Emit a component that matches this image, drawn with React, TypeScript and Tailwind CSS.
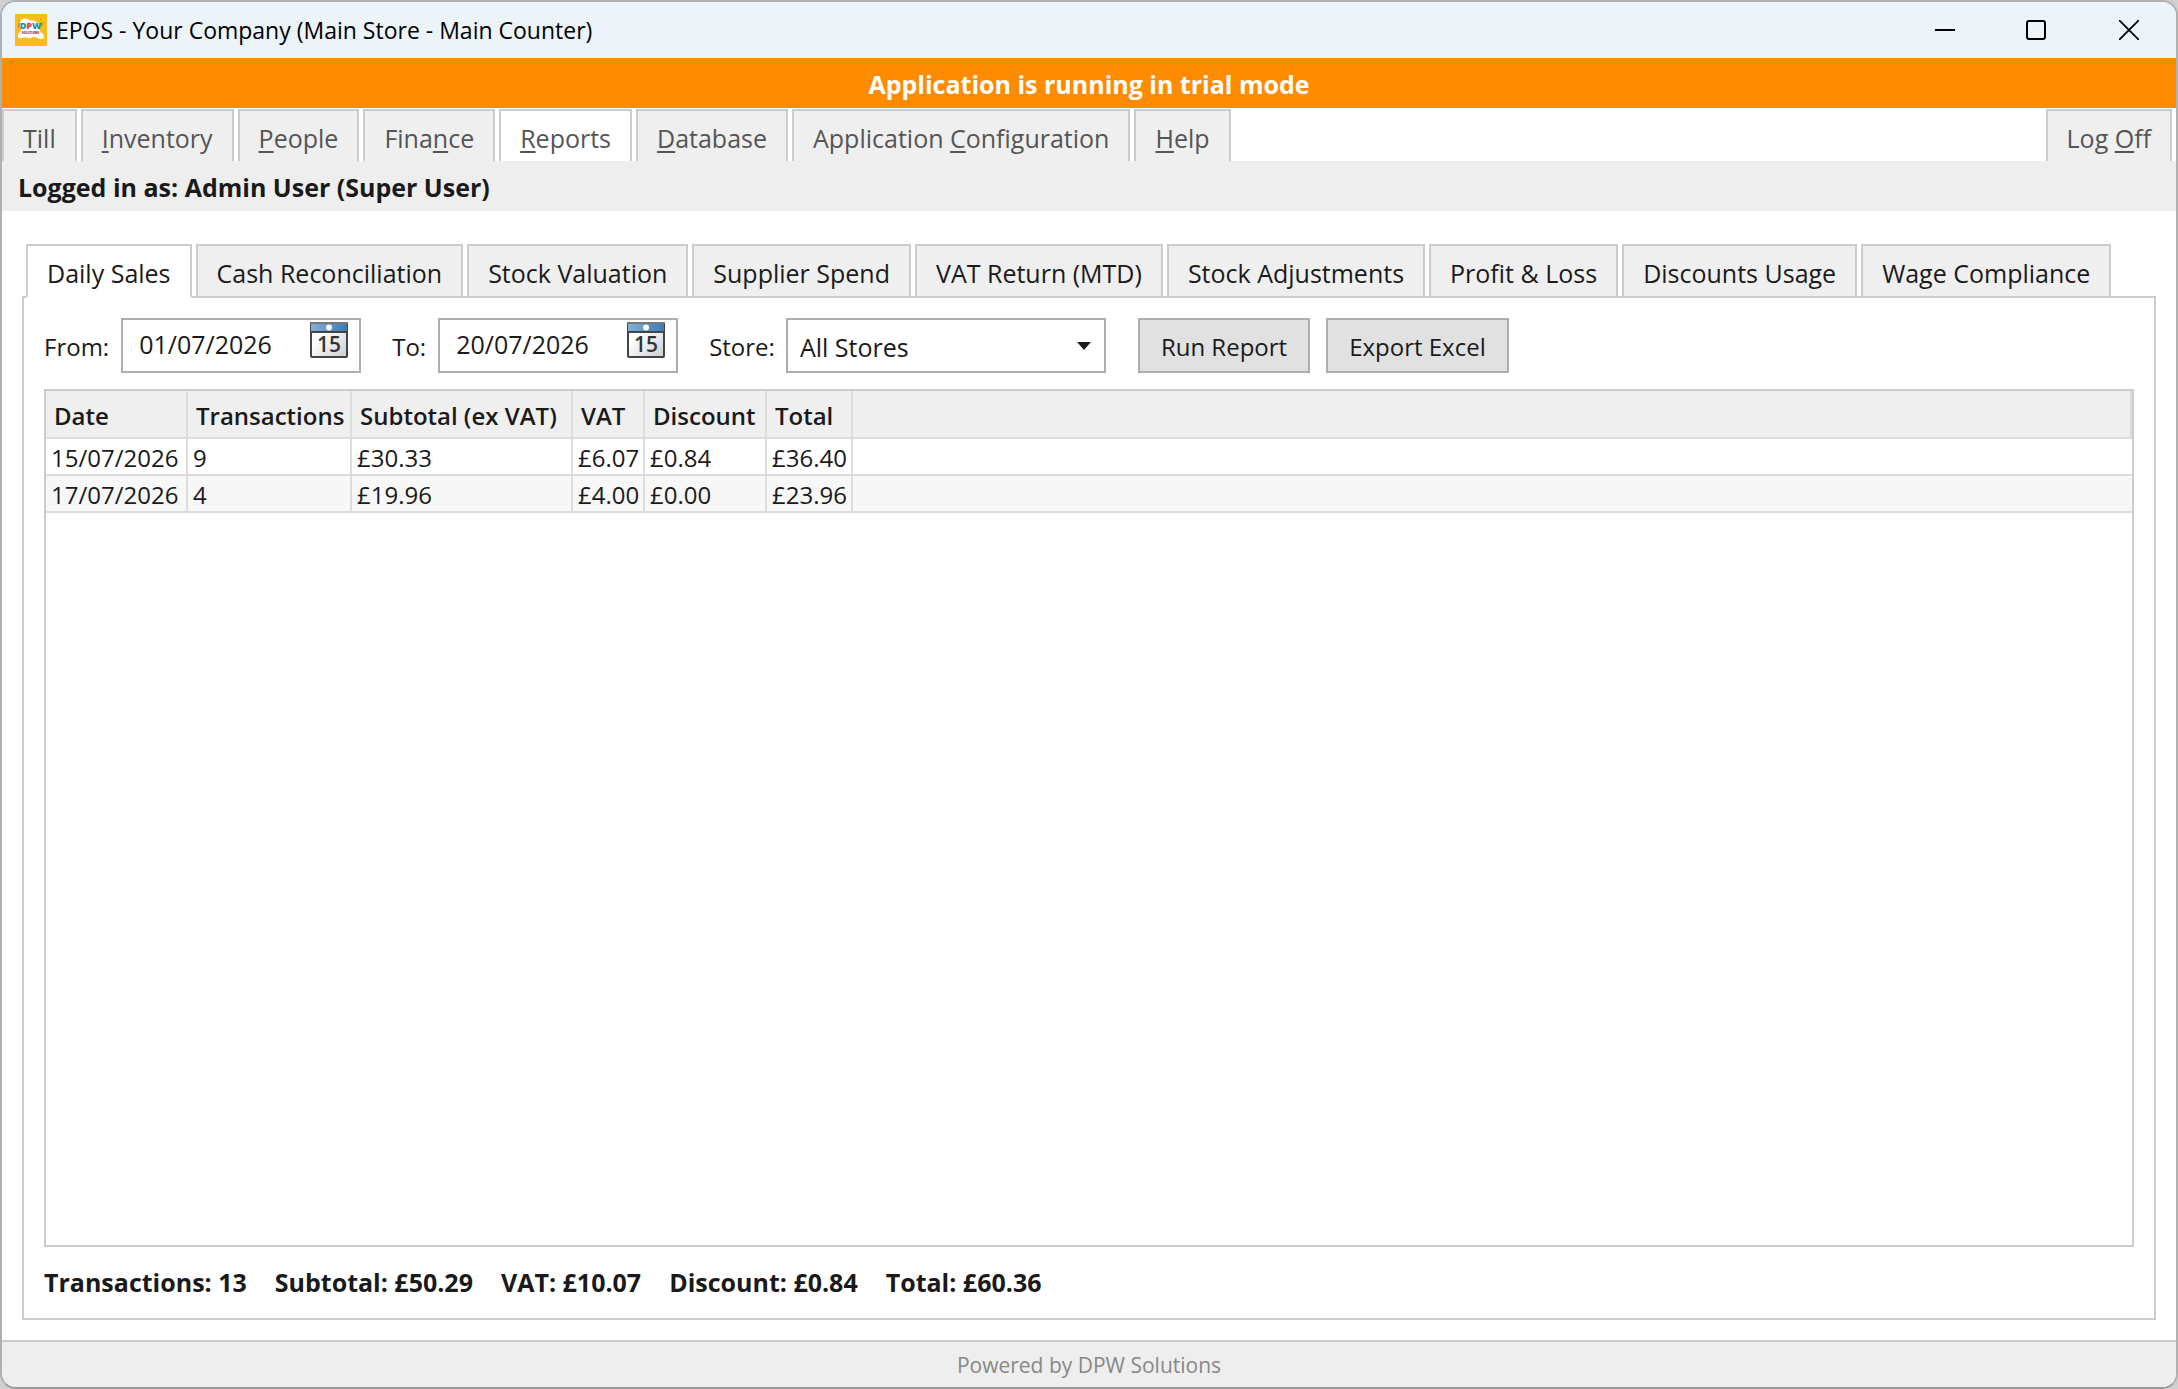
import { useState } from "react";

interface MenuTab {
  before: string;
  key: string;
  after: string;
}

interface SalesRow {
  date: string;
  transactions: number;
  subtotal: string;
  vat: string;
  discount: string;
  total: string;
}

const menuTabs: MenuTab[] = [
  { before: "", key: "T", after: "ill" },
  { before: "", key: "I", after: "nventory" },
  { before: "", key: "P", after: "eople" },
  { before: "Fina", key: "n", after: "ce" },
  { before: "", key: "R", after: "eports" },
  { before: "", key: "D", after: "atabase" },
  { before: "Application ", key: "C", after: "onfiguration" },
  { before: "", key: "H", after: "elp" },
];

const reportTabs = [
  "Daily Sales",
  "Cash Reconciliation",
  "Stock Valuation",
  "Supplier Spend",
  "VAT Return (MTD)",
  "Stock Adjustments",
  "Profit & Loss",
  "Discounts Usage",
  "Wage Compliance",
];

const columns = [
  { title: "Date", width: "w-[142px]" },
  { title: "Transactions", width: "w-[164px]" },
  { title: "Subtotal (ex VAT)", width: "w-[221px]" },
  { title: "VAT", width: "w-[72px]" },
  { title: "Discount", width: "w-[122px]" },
  { title: "Total", width: "w-[86px]" },
];

const rows: SalesRow[] = [
  {
    date: "15/07/2026",
    transactions: 9,
    subtotal: "£30.33",
    vat: "£6.07",
    discount: "£0.84",
    total: "£36.40",
  },
  {
    date: "17/07/2026",
    transactions: 4,
    subtotal: "£19.96",
    vat: "£4.00",
    discount: "£0.00",
    total: "£23.96",
  },
];

const totals = [
  "Transactions: 13",
  "Subtotal: £50.29",
  "VAT: £10.07",
  "Discount: £0.84",
  "Total: £60.36",
];

function Logo() {
  return (
    <svg viewBox="0 0 32 32" className="size-8" aria-hidden="true">
      <rect width="32" height="32" fill="#f9bc18" />
      <path
        d="M6 6c2-2 6-2 8 0 2 1 4 0 6 1 3 1 4 4 4 7 0 3 2 4 4 6 2 3 1 5-2 5-3 0-4-2-7-2s-4 2-7 1c-2-1-3-1-5 0-3 1-5-1-4-3 1-3 3-3 3-6 0-3-2-6 0-9z"
        fill="#fff"
      />
      <path d="M4 9v5M5 6l-1 1M27 8v4M25 5l1 1" stroke="#a5822a" strokeWidth="1" />
      <g
        fontFamily="Open Sans, sans-serif"
        fontWeight="800"
        textAnchor="middle"
      >
        <text x="15.5" y="15" fontSize="9">
          <tspan fill="#1f8fae">D</tspan>
          <tspan fill="#d9433a">P</tspan>
          <tspan fill="#1f8fae">W</tspan>
        </text>
        <text x="15.5" y="20" fontSize="3" fill="#8a3b34">
          SOLUTIONS
        </text>
      </g>
    </svg>
  );
}

function CalendarIcon() {
  return (
    <svg viewBox="0 0 38 36" className="h-9 w-[38px]" aria-hidden="true">
      <defs>
        <linearGradient id="cal-top" x1="0" y1="0" x2="1" y2="0">
          <stop offset="0" stopColor="#86b0d8" />
          <stop offset="1" stopColor="#3c7ab4" />
        </linearGradient>
        <linearGradient id="cal-page" x1="0" y1="0" x2="1" y2="1">
          <stop offset="0.3" stopColor="#fff" />
          <stop offset="1" stopColor="#c9ced3" />
        </linearGradient>
      </defs>
      <rect x="1" y="1" width="36" height="34" rx="1" fill="url(#cal-page)" stroke="#444" strokeWidth="2" />
      <rect x="1" y="1" width="36" height="8" fill="url(#cal-top)" />
      <path d="M0 1h38" stroke="#777" strokeWidth="2" />
      <path d="M0 10h38" stroke="#444" strokeWidth="2" />
      <circle cx="19" cy="5.5" r="3" fill="#fff" />
      <text
        x="19"
        y="30"
        textAnchor="middle"
        fontFamily="Open Sans, sans-serif"
        fontSize="21"
        fontWeight="600"
        fill="#333"
      >
        15
      </text>
    </svg>
  );
}

function TitleBar() {
  return (
    <header className="flex h-14 items-center bg-[#ecf4fa] pl-[13px]">
      <Logo />
      <h1 className="ml-[9px] text-[23px] text-black">
        EPOS - Your Company (Main Store - Main Counter)
      </h1>
      <div className="ml-auto flex h-full items-center">
        <button type="button" aria-label="Minimise" className="flex h-full w-[90px] items-center justify-center">
          <svg viewBox="0 0 20 20" className="size-5">
            <path d="M0 10h20" stroke="#000" strokeWidth="2" />
          </svg>
        </button>
        <button type="button" aria-label="Maximise" className="flex h-full w-[92px] items-center justify-center">
          <svg viewBox="0 0 20 20" className="size-5">
            <rect x="1" y="1" width="18" height="18" rx="2" fill="none" stroke="#000" strokeWidth="2" />
          </svg>
        </button>
        <button type="button" aria-label="Close" className="flex h-full w-[94px] items-center justify-center">
          <svg viewBox="0 0 20 20" className="size-5">
            <path d="M0 0l20 20M20 0L0 20" stroke="#000" strokeWidth="1.8" />
          </svg>
        </button>
      </div>
    </header>
  );
}

function MenuButton({
  tab,
  active = false,
  onClick,
}: {
  tab: MenuTab;
  active?: boolean;
  onClick?: () => void;
}) {
  return (
    <button
      type="button"
      onClick={onClick}
      className={`border-2 border-b-0 border-[#cccccc] px-[19px] pt-[3px] whitespace-nowrap text-[#555555] ${
        active ? "bg-white" : "bg-[#efefef]"
      }`}
    >
      {tab.before}
      <span className="underline decoration-2 underline-offset-3">{tab.key}</span>
      {tab.after}
    </button>
  );
}

function DateField({ id, label, value }: { id: string; label: string; value: string }) {
  return (
    <div className="mr-[31px] flex items-center gap-3">
      <label htmlFor={id} className="pt-0.5 text-[24px]">
        {label}
      </label>
      <div className="flex h-[55px] w-60 border-2 border-[#abadb3] bg-white">
        <input
          id={id}
          type="text"
          defaultValue={value}
          className="min-w-0 flex-1 pb-1 pl-4 outline-none"
        />
        <button type="button" aria-label="Show calendar" className="mt-0.5 mr-[11px] self-start">
          <CalendarIcon />
        </button>
      </div>
    </div>
  );
}

function SalesTable() {
  return (
    <div className="flex-1 border-2 border-[#cccccc] text-[24px]">
      <table className="w-full table-fixed border-separate border-spacing-0 text-left">
        <thead>
          <tr className="h-12">
            {columns.map((column) => (
              <th
                key={column.title}
                className={`border-r-2 border-b-2 border-[#dcdcdc] bg-[#efefef] pt-1 pl-2 font-semibold whitespace-nowrap ${column.width}`}
              >
                {column.title}
              </th>
            ))}
            <th className="border-r-2 border-b-2 border-[#dcdcdc] bg-[#efefef]" />
          </tr>
        </thead>
        <tbody>
          {rows.map((row) => (
            <tr key={row.date} className="h-[37px] even:bg-[#f7f7f7]">
              {Object.values(row).map((value, index) => (
                <td key={index} className="border-r-2 border-b-2 border-[#dcdcdc] pt-0.5 pl-[5px] whitespace-nowrap">
                  {value}
                </td>
              ))}
              <td className="border-b-2 border-[#dcdcdc]" />
            </tr>
          ))}
        </tbody>
      </table>
    </div>
  );
}

function App() {
  const [menu, setMenu] = useState(4);
  const [report, setReport] = useState(0);

  return (
    <div className="bg-[#d0d0d0] font-['Open_Sans','Noto_Sans',sans-serif] text-[25px] leading-8 text-[#1a1a1a]">
      <div className="flex min-h-screen flex-col overflow-hidden rounded-2xl border-2 border-[#b0b0b0] border-b-[#999999] bg-white">
        <TitleBar />

        <div className="flex h-[50px] items-center justify-center bg-[#ff8c00] pt-0.5 font-bold text-white">
          Application is running in trial mode
        </div>

        <nav className="flex h-[53px] gap-1 pt-px pr-1">
          {menuTabs.map((tab, index) => (
            <MenuButton
              key={tab.before + tab.key + tab.after}
              tab={tab}
              active={index === menu}
              onClick={() => setMenu(index)}
            />
          ))}
          <div className="ml-auto flex">
            <MenuButton tab={{ before: "Log ", key: "O", after: "ff" }} />
          </div>
        </nav>

        <div className="flex h-[50px] items-center bg-[#eeeeee] px-4 pt-0.5 font-bold">
          Logged in as: Admin User (Super User)
        </div>

        <main className="flex flex-1 flex-col px-5 pt-[33px] pb-5">
          <div role="tablist" className="z-10 -mb-0.5 flex h-[54px] gap-1 px-1">
            {reportTabs.map((name, index) => (
              <button
                key={name}
                type="button"
                role="tab"
                aria-selected={index === report}
                onClick={() => setReport(index)}
                className={`border-2 px-[19px] pt-[3px] whitespace-nowrap ${
                  index === report
                    ? "border-[#cccccc] border-b-white bg-white"
                    : "border-[#cccccc] bg-[#efefef]"
                }`}
              >
                {name}
              </button>
            ))}
          </div>

          <section className="flex flex-1 flex-col border-2 border-[#cccccc] px-5 pt-5">
            <form className="mb-4 flex items-center" onSubmit={(event) => event.preventDefault()}>
              <DateField id="from" label="From:" value="01/07/2026" />
              <DateField id="to" label="To:" value="20/07/2026" />

              <label htmlFor="store" className="mr-[11px] pt-0.5 text-[24px]">
                Store:
              </label>
              <div className="relative mr-8">
                <select
                  id="store"
                  className="h-[55px] w-80 appearance-none border-2 border-[#abadb3] bg-white pt-0.5 pl-3 outline-none"
                >
                  <option>All Stores</option>
                </select>
                <svg
                  viewBox="0 0 14 8"
                  className="pointer-events-none absolute top-6 right-[15px] h-2 w-3.5"
                  aria-hidden="true"
                >
                  <path d="M0 0h14L7 8z" fill="#1a1a1a" />
                </svg>
              </div>

              <button
                type="submit"
                className="mr-4 h-[55px] border-2 border-[#adadad] bg-[#e1e1e1] px-[21px] pt-0.5 text-[24px]"
              >
                Run Report
              </button>
              <button
                type="button"
                className="h-[55px] border-2 border-[#adadad] bg-[#e1e1e1] px-[21px] pt-0.5 text-[24px]"
              >
                Export Excel
              </button>
            </form>

            <SalesTable />

            <div className="flex h-[71px] items-center gap-7 pb-0.5 font-bold">
              {totals.map((text) => (
                <span key={text}>{text}</span>
              ))}
            </div>
          </section>
        </main>

        <footer className="flex h-[47px] items-center justify-center border-t-2 border-[#cccccc] bg-[#eeeeee] text-[21px] text-[#888888]">
          Powered by DPW Solutions
        </footer>
      </div>
    </div>
  );
}

export default App;
